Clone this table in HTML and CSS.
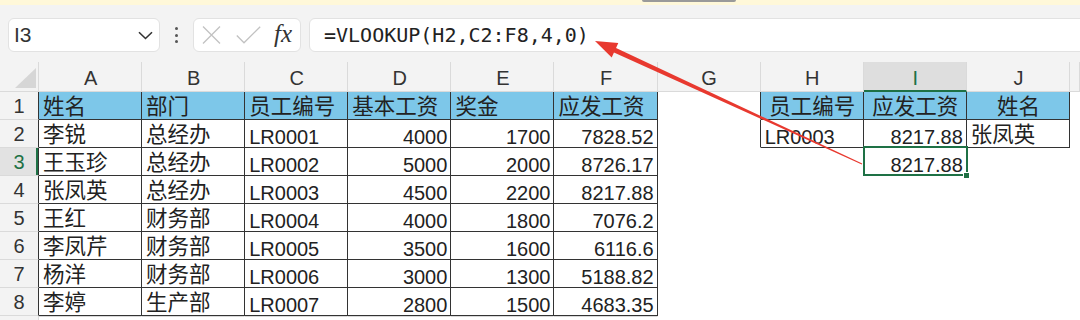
FILE: index.html
```html
<!DOCTYPE html>
<html lang="zh">
<head>
<meta charset="utf-8">
<title>VLOOKUP</title>
<link rel="stylesheet" href="styles.css">
</head>
<body>
<div class="app">
  <div class="topbar"><div class="topbar-tab"></div></div>
  <div class="toolbar">
    <div class="namebox">
      <span class="nb-text">I3</span>
      <svg class="chev" width="15" height="9" viewBox="0 0 15 9"><path d="M1 1.2 L7.5 7.5 L14 1.2" fill="none" stroke="#333" stroke-width="1.6"/></svg>
    </div>
    <div class="dots"><i></i><i></i><i></i></div>
    <div class="fxbox">
      <svg class="ic-x" width="19" height="18" viewBox="0 0 19 18"><path d="M1 0.5 L18 17.5 M18 0.5 L1 17.5" stroke="#c2c2c2" stroke-width="1.3" fill="none"/></svg>
      <svg class="ic-ok" width="25" height="18" viewBox="0 0 25 18"><path d="M0.8 9.5 L8 16.8 L24.2 0.8" stroke="#c2c2c2" stroke-width="1.3" fill="none"/></svg>
      <span class="fx">fx</span>
    </div>
    <div class="formula">=VLOOKUP(H2,C2:F8,4,0)</div>
  </div>

  <div class="sheet">
    <div class="c corner"><span class="tri"></span></div>
    <div class="c h">A</div><div class="c h">B</div><div class="c h">C</div><div class="c h">D</div><div class="c h">E</div><div class="c h">F</div><div class="c h">G</div><div class="c h">H</div><div class="c h on">I</div><div class="c h">J</div><div class="c h"></div>

    <div class="c rn bl">1</div>
    <div class="c t bf zh">姓名</div><div class="c t bf zh">部门</div><div class="c t bf zh">员工编号</div><div class="c t bf zh">基本工资</div><div class="c t bf zh">奖金</div><div class="c t bf zh">应发工资</div>
    <div class="c bl"></div>
    <div class="c t bf zh ct">员工编号</div><div class="c t bf zh ct">应发工资</div><div class="c t bf zh ct">姓名</div><div class="c"></div>

    <div class="c rn bl">2</div>
    <div class="c t zh">李锐</div><div class="c t zh">总经办</div><div class="c t">LR0001</div><div class="c t n">4000</div><div class="c t n">1700</div><div class="c t n">7828.52</div>
    <div class="c bl"></div>
    <div class="c t">LR0003</div><div class="c t n">8217.88</div><div class="c t zh">张凤英</div><div class="c"></div>

    <div class="c rn bl on">3</div>
    <div class="c t zh">王玉珍</div><div class="c t zh">总经办</div><div class="c t">LR0002</div><div class="c t n">5000</div><div class="c t n">2000</div><div class="c t n">8726.17</div>
    <div class="c"></div>
    <div class="c"></div><div class="c n sel">8217.88</div><div class="c"></div><div class="c"></div>

    <div class="c rn bl">4</div>
    <div class="c t zh">张凤英</div><div class="c t zh">总经办</div><div class="c t">LR0003</div><div class="c t n">4500</div><div class="c t n">2200</div><div class="c t n">8217.88</div>
    <div class="c"></div><div class="c"></div><div class="c"></div><div class="c"></div><div class="c"></div>

    <div class="c rn bl">5</div>
    <div class="c t zh">王红</div><div class="c t zh">财务部</div><div class="c t">LR0004</div><div class="c t n">4000</div><div class="c t n">1800</div><div class="c t n">7076.2</div>
    <div class="c"></div><div class="c"></div><div class="c"></div><div class="c"></div><div class="c"></div>

    <div class="c rn bl">6</div>
    <div class="c t zh">李凤芹</div><div class="c t zh">财务部</div><div class="c t">LR0005</div><div class="c t n">3500</div><div class="c t n">1600</div><div class="c t n">6116.6</div>
    <div class="c"></div><div class="c"></div><div class="c"></div><div class="c"></div><div class="c"></div>

    <div class="c rn bl">7</div>
    <div class="c t zh">杨洋</div><div class="c t zh">财务部</div><div class="c t">LR0006</div><div class="c t n">3000</div><div class="c t n">1300</div><div class="c t n">5188.82</div>
    <div class="c"></div><div class="c"></div><div class="c"></div><div class="c"></div><div class="c"></div>

    <div class="c rn bl">8</div>
    <div class="c t zh">李婷</div><div class="c t zh">生产部</div><div class="c t">LR0007</div><div class="c t n">2800</div><div class="c t n">1500</div><div class="c t n">4683.35</div>
    <div class="c"></div><div class="c"></div><div class="c"></div><div class="c"></div><div class="c"></div>

    <div class="c rn"></div>
    <div class="c r9"></div><div class="c r9"></div><div class="c r9"></div><div class="c r9"></div><div class="c r9"></div><div class="c r9"></div>
    <div class="c"></div><div class="c"></div><div class="c"></div><div class="c"></div><div class="c"></div>
  </div>

  <svg class="arrow" width="1080" height="320" viewBox="0 0 1080 320">
    <polygon points="595,41 618.3,42.9 616.05,47.93 862.2,163.55 861.8,164.45 613.95,52.47 611.7,57.5" fill="#e8392f"/>
  </svg>
</div>
</body>
</html>
```

FILE: styles.css
```css
body {
  margin: 0;
  background: #fff;
  font-family: "Liberation Sans", "Noto Sans CJK SC", sans-serif;
}

.app {
  position: relative;
  width: 1080px;
  height: 320px;
  overflow: hidden;
  background: #f3f3f3;
}

.topbar {
  height: 5px;
  background: #fff8d9;
}

.topbar-tab {
  margin-left: 642px;
  width: 94px;
  height: 2px;
  border-radius: 0 0 2px 2px;
  background: #9a9a9a;
}

.toolbar {
  display: flex;
  align-items: center;
  height: 34px;
  padding: 13px 0 10px 8px;
}

.namebox {
  box-sizing: border-box;
  width: 152px;
  height: 34px;
  background: #fff;
  border: 1px solid #e2e2e2;
  border-radius: 6px;
  display: flex;
  align-items: center;
  justify-content: space-between;
  padding: 0 6px 0 5px;
}

.nb-text {
  font-size: 21px;
  color: #333;
}

.dots {
  width: 33px;
  display: flex;
  flex-direction: column;
  align-items: center;
  gap: 3.4px;
}

.dots i {
  display: block;
  width: 3px;
  height: 3px;
  border-radius: 50%;
  background: #555;
}

.fxbox {
  box-sizing: border-box;
  width: 108px;
  height: 34px;
  background: #fff;
  border: 1px solid #e2e2e2;
  border-radius: 6px;
  display: flex;
  align-items: center;
  padding-left: 8px;
}

.ic-ok {
  margin-left: 15px;
}

.fx {
  margin-left: 13px;
  font-family: "Liberation Serif", serif;
  font-style: italic;
  font-size: 25px;
  color: #333;
  line-height: 1;
  margin-top: -3px;
}

.formula {
  flex: 1;
  box-sizing: border-box;
  height: 34px;
  margin-left: 8px;
  margin-right: -20px;
  background: #fff;
  border: 1px solid #e2e2e2;
  border-radius: 6px;
  display: flex;
  align-items: center;
  padding-left: 14px;
  font-family: "DejaVu Sans Mono", monospace;
  font-size: 20px;
  color: #222;
}

.sheet {
  display: grid;
  grid-template-columns: 39px repeat(10, 103.1px) 1fr;
  grid-template-rows: 30px repeat(9, 28px);
  background: #fff;
}

.c {
  box-sizing: border-box;
  border-right: 1px solid transparent;
  border-bottom: 1px solid transparent;
  display: flex;
  align-items: flex-end;
  padding: 0 3px 0 4px;
  font-size: 20px;
  line-height: 20px;
  color: #222;
  white-space: nowrap;
  overflow: hidden;
}

.corner {
  background: #f3f3f3;
  border-color: #dadada;
  justify-content: flex-end;
  padding: 0 2px 3px 0;
}

.tri {
  width: 0;
  height: 0;
  border-left: 21px solid transparent;
  border-bottom: 20px solid #d6d6d6;
}

.h {
  background: #f3f3f3;
  border-color: #dadada;
  justify-content: center;
  padding-bottom: 3px;
  color: #333;
}

.h.on {
  background: #dedede;
  color: #1e7145;
  border-bottom: 2px solid #1e7145;
  padding-bottom: 2px;
}

.rn {
  background: #f3f3f3;
  border-color: #dadada;
  justify-content: center;
  align-items: center;
  padding: 0;
  color: #333;
}

.rn.on {
  background: #e2e2e2;
  color: #1e7145;
  box-shadow: inset -2px 0 0 #1e7145;
}

.t {
  border-right-color: #333;
  border-bottom-color: #333;
}

.bl {
  border-right-color: #333;
}

.r9 {
  border-top: 1px solid #d8d8d8;
}

.bf {
  background: #7dc7e9;
}

.n {
  justify-content: flex-end;
}

.ct {
  justify-content: center;
}

.zh {
  font-size: 21.5px;
  padding-bottom: 2px;
}

.sel {
  position: relative;
  z-index: 1;
  overflow: visible;
}

.sel::before {
  content: "";
  position: absolute;
  left: -1px;
  top: -2px;
  right: -2px;
  bottom: -1px;
  border: 2px solid #1e7145;
}

.sel::after {
  content: "";
  position: absolute;
  right: -4px;
  bottom: -4px;
  width: 5px;
  height: 5px;
  background: #1e7145;
  border: 1px solid #fff;
}

.arrow {
  position: absolute;
  left: 0;
  top: 0;
  z-index: 5;
  pointer-events: none;
}
```
